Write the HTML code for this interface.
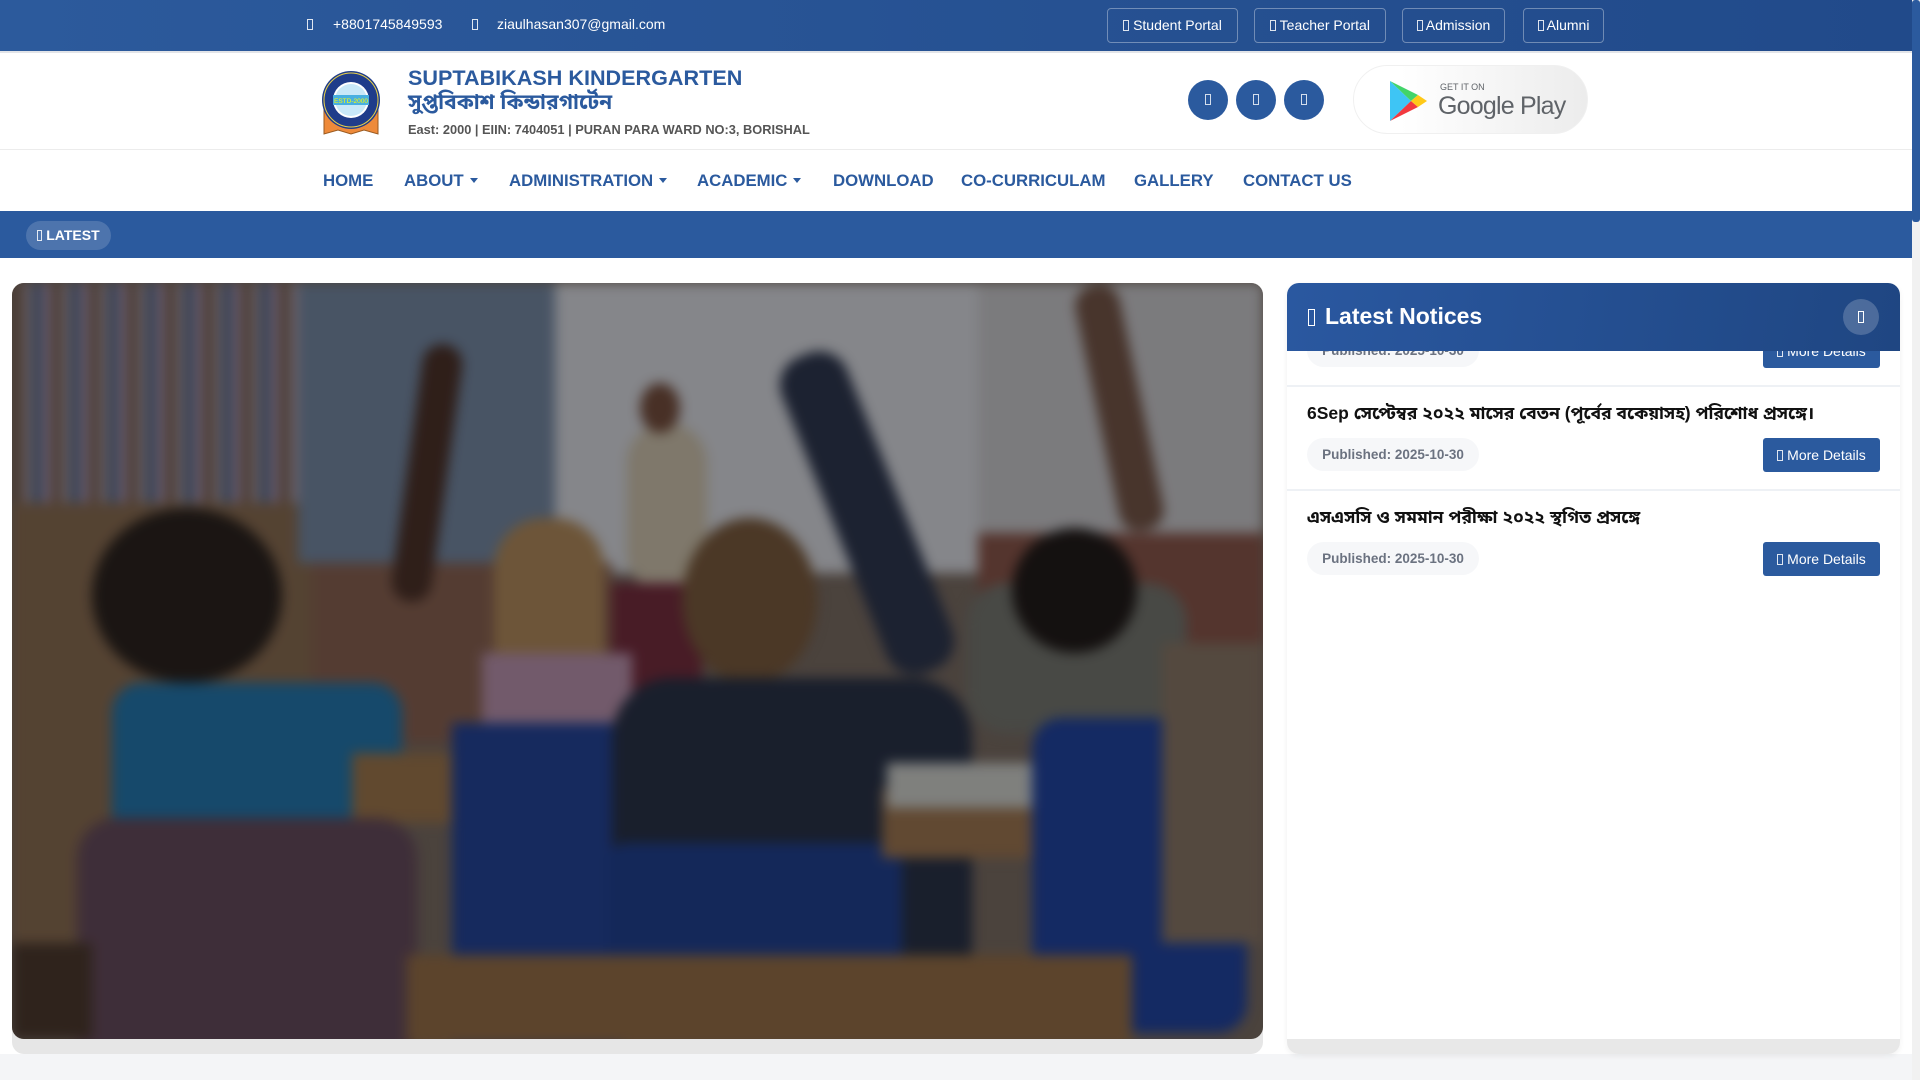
<!DOCTYPE html>
<html><head><meta charset="utf-8"><style>
*{margin:0;padding:0;box-sizing:border-box}
body{width:1920px;height:1080px;overflow:hidden;background:#f4f5f7;font-family:"Liberation Sans",sans-serif;position:relative}
.abs{position:absolute}
.top{left:0;top:0;width:1912px;height:51px;background:linear-gradient(90deg,#2c5a9c,#214a8a)}
.top span.t{position:absolute;top:16px;color:#fff;font-size:14px}
.tofu{display:inline-block;width:6px;height:11px;border:1px solid rgba(255,255,255,.85);vertical-align:-1px}
.tb{position:absolute;top:8px;height:35px;border:1px solid rgba(255,255,255,.35);border-radius:4px;color:#fff;font-size:14px;line-height:33px;text-align:center}
.hdr{left:0;top:51px;width:1912px;height:99px;background:#fff;border-top:2px solid #e2e4e8;border-bottom:1px solid #ececec}
.nav{left:0;top:150px;width:1912px;height:61px;background:#fff}
.nav a{position:absolute;top:21px;font-size:16.8px;font-weight:bold;color:#2b5a9e;text-decoration:none}
.car{display:inline-block;width:0;height:0;border-left:4px solid transparent;border-right:4px solid transparent;border-top:5px solid #2b5a9e;vertical-align:3px;margin-left:6px}
.latest{left:0;top:211px;width:1912px;height:47px;background:#2b5a9e}
.soc{position:absolute;top:80px;width:40px;height:40px;border-radius:50%;background:#2b5a9e}
.soc i{position:absolute;left:17px;top:14px;width:6px;height:11px;border:1px solid rgba(255,255,255,.8)}
.blob{position:absolute}
.panel{left:1287px;top:283px;width:613px;height:771px;background:#fff;border-radius:12px;overflow:hidden;box-shadow:0 2px 6px rgba(0,0,0,.06)}
.ph{position:absolute;left:0;top:0;width:613px;height:68px;background:linear-gradient(100deg,#2a58a0,#1f4682);z-index:2}
.pill{position:absolute;left:20px;height:33px;width:172px;background:#f6f7f9;border-radius:17px;color:#6b7280;font-size:13.5px;font-weight:bold;line-height:33px;text-align:center}
.md{position:absolute;left:476px;width:117px;height:34px;background:#2b5a9e;border-radius:3px;color:#fff;font-size:14px;line-height:34px;text-align:center}
.nt{position:absolute;left:20px;font-size:17.5px;font-weight:bold;color:#111;font-family:"Liberation Sans","Noto Sans Bengali",sans-serif;white-space:nowrap}
.div{position:absolute;left:0;width:613px;height:2px;background:#eef1f5}
</style></head><body>

<div class="abs top">
  <span class="t" style="left:307px"><span class="tofu"></span></span>
  <span class="t" style="left:333px">+8801745849593</span>
  <span class="t" style="left:472px"><span class="tofu"></span></span>
  <span class="t" style="left:497px">ziaulhasan307@gmail.com</span>
  <div class="tb" style="left:1107px;width:131px"><span class="tofu"></span> Student Portal</div>
  <div class="tb" style="left:1254px;width:132px"><span class="tofu"></span> Teacher Portal</div>
  <div class="tb" style="left:1402px;width:103px"><span class="tofu"></span> Admission</div>
  <div class="tb" style="left:1523px;width:81px"><span class="tofu"></span> Alumni</div>
</div>
<div class="abs" style="left:1912px;top:0;width:8px;height:1080px;background:#f1f1f1"></div>
<div class="abs" style="left:1912px;top:0;width:8px;height:222px;background:#2b5a9e;border-radius:3px"></div>

<div class="abs hdr">
  <svg class="abs" style="left:320px;top:13px" width="62" height="70" viewBox="0 0 62 70">
    <path d="M4 40 L4 68 L18 64 L31 68 L44 64 L58 68 L58 40 Z" fill="#ee8a3a" stroke="#9a5a20" stroke-width="1"/>
    <circle cx="31" cy="34" r="29" fill="#1f3c8a"/>
    <circle cx="31" cy="34" r="27" fill="none" stroke="#e8d048" stroke-width="1"/>
    <circle cx="31" cy="34" r="18" fill="#fff"/>
    <circle cx="31" cy="34" r="16" fill="#c8e8f8"/>
    <rect x="13" y="29" width="36" height="10" fill="#48b0e0"/>
    <text x="31" y="37" font-size="6.5" text-anchor="middle" fill="#ff0" font-family="Liberation Sans">ESTD-2000</text>
  </svg>
  <div class="abs" style="left:408px;top:12px;font-size:21.6px;font-weight:bold;color:#2b5a9e">SUPTABIKASH KINDERGARTEN</div>
  <div class="abs" style="left:408px;top:37px;font-size:21px;font-weight:bold;color:#2b5a9e;font-family:'Liberation Sans','Noto Sans Bengali',sans-serif">সুপ্তবিকাশ কিন্ডারগার্টেন</div>
  <div class="abs" style="left:408px;top:69px;font-size:12.8px;font-weight:bold;color:#555">East: 2000 | EIIN: 7404051 | PURAN PARA WARD NO:3, BORISHAL</div>
  <div class="soc" style="left:1188px;top:27px"><i></i></div>
  <div class="soc" style="left:1236px;top:27px"><i></i></div>
  <div class="soc" style="left:1284px;top:27px"><i></i></div>
  <div class="abs" style="left:1353px;top:12px;width:235px;height:69px;border-radius:35px;background:linear-gradient(90deg,#fff 20%,#ececec);border:1px solid #f0f0f0">
    <svg class="abs" style="left:34px;top:14px" width="42" height="42" viewBox="0 0 42 42">
      <path d="M2 1 L23 21 L2 41 Z" fill="#3ec5f5"/>
      <path d="M2 1 L30 15 L23 21 Z" fill="#42d46a"/>
      <path d="M2 41 L30 27 L23 21 Z" fill="#f2393f"/>
      <path d="M30 15 L39 21 L30 27 L23 21 Z" fill="#ffc918"/>
    </svg>
    <div class="abs" style="left:86px;top:16px;font-size:9px;color:#5f6368">GET IT ON</div>
    <div class="abs" style="left:84px;top:26px;font-size:25px;color:#5f6368;letter-spacing:-0.8px">Google Play</div>
  </div>
</div>

<div class="abs nav">
  <a style="left:323px">HOME</a>
  <a style="left:404px">ABOUT<span class="car"></span></a>
  <a style="left:509px">ADMINISTRATION<span class="car"></span></a>
  <a style="left:697px">ACADEMIC<span class="car"></span></a>
  <a style="left:833px">DOWNLOAD</a>
  <a style="left:961px">CO-CURRICULAM</a>
  <a style="left:1134px">GALLERY</a>
  <a style="left:1243px">CONTACT US</a>
</div>

<div class="abs latest">
  <div class="abs" style="left:26px;top:10px;width:85px;height:29px;border-radius:15px;background:rgba(255,255,255,.16);color:#fff;font-weight:bold;font-size:14px;line-height:29px;text-align:center"><span class="tofu" style="width:5px"></span> LATEST</div>
</div>

<div class="abs" style="left:0;top:258px;width:1912px;height:796px;background:#fff"></div>

<!-- image -->
<div class="abs" style="left:12px;top:283px;width:1251px;height:771px;background:#e6e6e6;border-radius:12px"></div>
<div class="abs" style="left:12px;top:283px;width:1251px;height:756px;border-radius:12px;overflow:hidden;background:#5e5246">
 <div style="position:absolute;left:0;top:0;width:1251px;height:756px;filter:blur(6px)">
  <div class="blob" style="left:0;top:0;width:290px;height:220px;background:repeating-linear-gradient(90deg,#5c4a3a 0 12px,#8a7a80 12px 20px,#3a4a5a 20px 30px,#907a90 30px 38px)"></div>
  <div class="blob" style="left:0;top:220px;width:320px;height:440px;background:#6a5238"></div>
  <div class="blob" style="left:286px;top:0;width:260px;height:280px;background:#5a6878"></div>
  <div class="blob" style="left:543px;top:0;width:425px;height:290px;background:#a8a8a8"></div>
  <div class="blob" style="left:966px;top:0;width:285px;height:260px;background:#9c9a98"></div>
  <div class="blob" style="left:966px;top:250px;width:285px;height:180px;background:#6a4032"></div>
  <div class="blob" style="left:300px;top:280px;width:300px;height:180px;background:#6a4a38"></div>
  <div class="blob" style="left:615px;top:140px;width:80px;height:170px;background:#a09680;border-radius:40px"></div>
  <div class="blob" style="left:628px;top:100px;width:40px;height:50px;background:#5a3a28;border-radius:50%"></div>
  <div class="blob" style="left:600px;top:300px;width:90px;height:120px;background:#5a2028"></div>
  <div class="blob" style="left:482px;top:235px;width:110px;height:200px;background:#8a6a40;border-radius:50px"></div>
  <div class="blob" style="left:470px;top:370px;width:150px;height:130px;background:#907080"></div>
  <div class="blob" style="left:80px;top:225px;width:190px;height:175px;background:#201810;border-radius:50%"></div>
  <div class="blob" style="left:395px;top:60px;width:40px;height:260px;background:#3a2418;border-radius:20px;transform:rotate(8deg)"></div>
  <div class="blob" style="left:100px;top:400px;width:290px;height:160px;background:#1a5a80;border-radius:30px"></div>
  <div class="blob" style="left:340px;top:470px;width:220px;height:70px;background:#7a5a34"></div>
  <div class="blob" style="left:440px;top:440px;width:170px;height:330px;background:#1a3270"></div>
  <div class="blob" style="left:65px;top:535px;width:340px;height:240px;background:#4e3840;border-radius:40px 40px 0 0"></div>
  <div class="blob" style="left:670px;top:235px;width:135px;height:165px;background:#5e4428;border-radius:50%"></div>
  <div class="blob" style="left:820px;top:60px;width:70px;height:340px;background:#222836;transform:rotate(-22deg);border-radius:30px"></div>
  <div class="blob" style="left:600px;top:395px;width:360px;height:300px;background:#1e2430;border-radius:60px 60px 0 0"></div>
  <div class="blob" style="left:595px;top:560px;width:295px;height:130px;background:#18306a;border-radius:20px"></div>
  <div class="blob" style="left:870px;top:505px;width:190px;height:70px;background:#7a5a38"></div>
  <div class="blob" style="left:875px;top:480px;width:170px;height:45px;background:#a0a098"></div>
  <div class="blob" style="left:1085px;top:0;width:45px;height:250px;background:#5a4030;transform:rotate(-12deg);border-radius:20px"></div>
  <div class="blob" style="left:955px;top:300px;width:220px;height:150px;background:#5a5a50;border-radius:40px"></div>
  <div class="blob" style="left:1000px;top:245px;width:125px;height:125px;background:#18120c;border-radius:50%"></div>
  <div class="blob" style="left:1020px;top:435px;width:215px;height:315px;background:#183276;border-radius:30px"></div>
  <div class="blob" style="left:1150px;top:360px;width:101px;height:300px;background:#6a5a48"></div>
  <div class="blob" style="left:395px;top:672px;width:725px;height:90px;background:#745430"></div>
  <div class="blob" style="left:0;top:660px;width:80px;height:96px;background:#3a2a1c"></div>
 </div>
 <div style="position:absolute;inset:0;background:rgba(10,15,30,.22)"></div>
</div>

<!-- notices -->
<div class="abs panel">
  <div class="ph">
    <span class="abs" style="left:21px;top:26px;width:7px;height:17px;border:1px solid #fff"></span>
    <div class="abs" style="left:38px;top:20px;color:#fff;font-size:23px;font-weight:bold">Latest Notices</div>
    <div class="abs" style="left:556px;top:16px;width:36px;height:36px;border-radius:50%;background:rgba(255,255,255,.2)"><span class="abs" style="left:15px;top:12px;width:6px;height:12px;border:1px solid #fff"></span></div>
  </div>
  <div class="pill" style="top:51px">Published: 2025-10-30</div>
  <div class="md" style="top:51px"><span class="tofu"></span> More Details</div>
  <div class="div" style="top:102px"></div>
  <div class="nt" style="top:120px">6Sep সেপ্টেম্বর ২০২২ মাসের বেতন (পূর্বের বকেয়াসহ) পরিশোধ প্রসঙ্গে।</div>
  <div class="pill" style="top:155px">Published: 2025-10-30</div>
  <div class="md" style="top:155px"><span class="tofu"></span> More Details</div>
  <div class="div" style="top:206px"></div>
  <div class="nt" style="top:224px">এসএসসি ও সমমান পরীক্ষা ২০২২ স্থগিত প্রসঙ্গে</div>
  <div class="pill" style="top:259px">Published: 2025-10-30</div>
  <div class="md" style="top:259px"><span class="tofu"></span> More Details</div>
  <div class="abs" style="left:0;top:756px;width:613px;height:15px;background:#e8e8e8"></div>
</div>
</body></html>
